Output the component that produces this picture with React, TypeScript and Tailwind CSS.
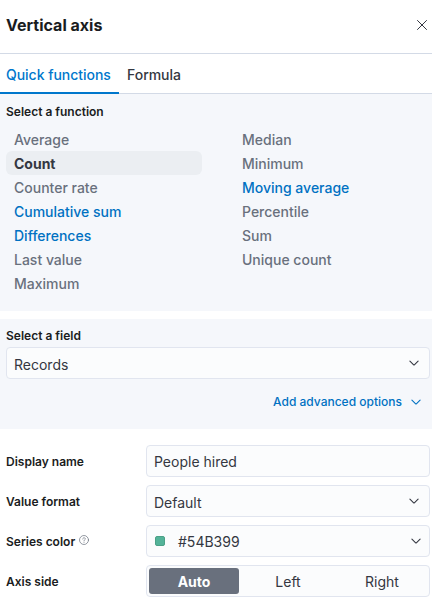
import React from "react";

type Tone = "gray" | "link" | "active";

const leftFunctions: [string, Tone][] = [
  ["Average", "gray"],
  ["Count", "active"],
  ["Counter rate", "gray"],
  ["Cumulative sum", "link"],
  ["Differences", "link"],
  ["Last value", "gray"],
  ["Maximum", "gray"],
];

const rightFunctions: [string, Tone][] = [
  ["Median", "gray"],
  ["Minimum", "gray"],
  ["Moving average", "link"],
  ["Percentile", "gray"],
  ["Sum", "gray"],
  ["Unique count", "gray"],
];

const tones: Record<Tone, string> = {
  gray: "font-medium text-[#69707d]",
  link: "font-medium text-[#0071c2]",
  active: "font-bold text-[#343741] bg-[#ebeef2]",
};

function FunctionList({ items }: { items: [string, Tone][] }) {
  return (
    <ul className="w-[196px] shrink-0">
      {items.map(([name, tone]) => (
        <li key={name} className={"h-6 rounded-md px-2 pt-px text-sm leading-6 " + tones[tone]}>
          {name}
        </li>
      ))}
    </ul>
  );
}

function Chevron({ className = "" }: { className?: string }) {
  return (
    <svg className={"h-4 w-4 shrink-0 " + className} viewBox="0 0 16 16" fill="none" stroke="currentColor" strokeWidth="1.1" strokeLinecap="round" strokeLinejoin="round">
      <path d="M3.9 6.1 7.65 9.85a.5.5 0 0 0 .7 0L12.1 6.1" />
    </svg>
  );
}

function Row({ label, help, children }: { label: string; help?: boolean; children: React.ReactNode }) {
  return (
    <div className="flex h-8">
      <div className="flex w-[140px] shrink-0 items-center pt-[2px] text-xs font-semibold text-[#1a1c21]">
        {label}
        {help && (
          <svg className="mb-[5px] ml-1 h-[10px] w-[10px]" viewBox="0 0 10 10" fill="none" stroke="#69707d" strokeWidth="0.7" strokeLinecap="round">
            <circle cx="5" cy="5" r="4.5" />
            <path d="M3.7 4C3.7 2.3 6.3 2.3 6.3 3.9 6.3 4.9 5 4.8 5 5.9M5 7.3v.1" />
          </svg>
        )}
      </div>
      {children}
    </div>
  );
}

const field = "flex h-8 flex-1 items-center rounded border border-[#e1e5ef] bg-[#fbfcfd] text-sm text-[#343741] ";

export default function App() {
  return (
    <div className="h-[602px] w-[432px] overflow-hidden bg-white font-['Inter',sans-serif] antialiased">
      <header className="flex h-[54px] items-center justify-between border-b border-[#d3dae6] pr-[5px] pl-1.5 pb-[3px]">
        <h2 className="text-base font-bold text-[#1a1c21]">Vertical axis</h2>
        <svg className="h-[10px] w-[10px]" viewBox="0 0 10 10" fill="none" stroke="#343741" strokeWidth="1" strokeLinecap="round">
          <path d="M.5.5 9.5 9.5M9.5.5.5 9.5" />
        </svg>
      </header>
      <nav className="flex h-10 border-b border-[#d3dae6] text-sm font-[450] tracking-[-0.03px] text-[#343741]">
        <div className="-mb-px flex w-[119px] items-center border-b-2 border-[#0077cc] pt-[3px] pl-1.5 whitespace-nowrap text-[#0077cc]">
          Quick functions
        </div>
        <div className="flex items-center pt-[2px] pl-2">Formula</div>
      </nav>
      <section className="h-[217px] bg-[#f5f7fb] px-1.5 pt-[9px]">
        <h3 className="text-xs leading-[18px] font-semibold text-[#1a1c21]">Select a function</h3>
        <div className="mt-[6px] flex gap-8">
          <FunctionList items={leftFunctions} />
          <FunctionList items={rightFunctions} />
        </div>
      </section>
      <section className="mt-2 h-[110px] bg-[#f5f7fb] pt-2 pr-0.5 pl-1.5">
        <h3 className="mb-[2px] text-xs leading-[18px] font-semibold text-[#1a1c21]">Select a field</h3>
        <div className={field + "justify-between pr-[7px] pl-[7px]"}>
          <span className="pt-[3px]">Records</span>
          <Chevron className="-mt-px" />
        </div>
        <div className="mt-[15px] flex items-center justify-end pr-[6px] text-xs leading-4 font-[550] text-[#0071c2]">
          <span>Add advanced options</span>
          <Chevron className="-mt-px ml-[6px]" />
        </div>
      </section>
      <section className="mt-4 flex flex-col gap-2 pr-0.5 pl-1.5">
        <Row label="Display name">
          <div className={field + "px-[7px] pt-[2px]"}>People hired</div>
        </Row>
        <Row label="Value format">
          <div className={field + "justify-between px-[7px]"}>
            <span className="pt-[3px]">Default</span>
            <Chevron className="-mt-px" />
          </div>
        </Row>
        <Row label="Series color" help>
          <div className={field + "pr-[5px] pl-[8px]"}>
            <span className="h-[10px] w-[10px] rounded-[2px] border border-[#4ca187] bg-[#54b399]" />
            <span className="ml-[13px] flex-1 pt-[2px]">#54B399</span>
            <Chevron />
          </div>
        </Row>
        <Row label="Axis side">
          <div className={field + "p-[2px]"}>
            <div className="flex h-[26px] w-[90px] items-center justify-center rounded-[3px] bg-[#69707d] pt-px font-bold text-white">Auto</div>
            <div className="flex w-[98px] items-center justify-center pt-px">Left</div>
            <div className="flex w-[90px] items-center justify-center pt-px">Right</div>
          </div>
        </Row>
      </section>
    </div>
  );
}
